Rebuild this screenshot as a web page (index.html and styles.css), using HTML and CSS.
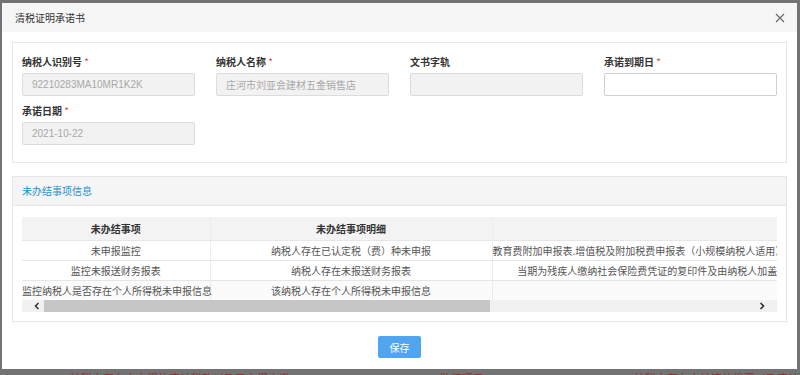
FILE: index.html
```html
<!DOCTYPE html>
<html lang="zh-CN">
<head>
<meta charset="UTF-8" />
<meta name="viewport" content="width=device-width, initial-scale=1" />
<title>清税证明承诺书</title>
<link rel="stylesheet" href="styles.css">
</head>
<body>

<div class="backdrop">
  <div class="modal">
    <div class="modal-head">
      <span class="modal-title">清税证明承诺书</span>
      <svg class="close-btn" width="10" height="10" viewBox="0 0 10 10">
        <path d="M1 1L9 9M9 1L1 9" stroke="#666" stroke-width="1.1" fill="none" />
      </svg>
    </div>

    <div class="modal-body">
      <div class="panel form-panel">
        <div class="form-grid">
          <div class="field">
            <label>纳税人识别号 <span class="req">*</span></label>
            <input class="ipt" type="text" value="92210283MA10MR1K2K" readonly />
          </div>
          <div class="field">
            <label>纳税人名称 <span class="req">*</span></label>
            <input class="ipt" type="text" value="庄河市刘亚会建材五金销售店" readonly />
          </div>
          <div class="field">
            <label>文书字轨</label>
            <input class="ipt" type="text" value="" readonly />
          </div>
          <div class="field">
            <label>承诺到期日 <span class="req">*</span></label>
            <input class="ipt ipt-edit" type="text" value="" />
          </div>
          <div class="field">
            <label>承诺日期 <span class="req">*</span></label>
            <input class="ipt" type="text" value="2021-10-22" readonly />
          </div>
        </div>
      </div>

      <div class="panel list-panel">
        <div class="panel-head">未办结事项信息</div>
        <div class="panel-inner">
          <div class="table-wrap">
            <table class="grid">
              <colgroup>
                <col class="c1" />
                <col class="c2" />
                <col class="c3" />
              </colgroup>
              <thead>
                <tr>
                  <th>未办结事项</th>
                  <th>未办结事项明细</th>
                  <th></th>
                </tr>
              </thead>
              <tbody>
                <tr>
                  <td>未申报监控</td>
                  <td>纳税人存在已认定税（费）种未申报</td>
                  <td>教育费附加申报表.增值税及附加税费申报表（小规模纳税人适用）附列资料（附加税费情况表）</td>
                </tr>
                <tr>
                  <td>监控未报送财务报表</td>
                  <td>纳税人存在未报送财务报表</td>
                  <td>当期为残疾人缴纳社会保险费凭证的复印件及由纳税人加盖公章的残疾职工名单</td>
                </tr>
                <tr>
                  <td>监控纳税人是否存在个人所得税未申报信息</td>
                  <td>该纳税人存在个人所得税未申报信息</td>
                  <td></td>
                </tr>
              </tbody>
            </table>
          </div>
          <div class="hscroll">
            <svg class="arrow" width="8" height="8" viewBox="0 0 8 8">
              <path d="M5.5 1L2.5 4L5.5 7" stroke="#333" stroke-width="1.6" fill="none" />
            </svg>
            <div class="track"><div class="thumb"></div></div>
            <svg class="arrow" width="8" height="8" viewBox="0 0 8 8">
              <path d="M2.5 1L5.5 4L2.5 7" stroke="#333" stroke-width="1.6" fill="none" />
            </svg>
          </div>
        </div>
      </div>
    </div>

    <div class="modal-foot">
      <button class="save-btn">保存</button>
    </div>
  </div>

  <div class="behind">
    <span class="w1">纳税人存在未申报的应纳税款以及已申报未缴</span>
    <span class="w2">监控项目</span>
    <span class="w3">纳税人存在未结清的发票以及应纳税款</span>
  </div>
</div>

</body>
</html>
```

FILE: styles.css
```css
html, body {
  margin: 0;
  height: 100%;
  overflow: hidden;
}
body {
  background: #737373;
  font-family: "Noto Sans CJK SC", "Liberation Sans", sans-serif;
  color: #333;
}
.backdrop {
  padding: 3px 3px 0 2px;
}
.modal {
  width: 795px;
  height: 366px;
  background: #fff;
  display: flex;
  flex-direction: column;
}
.modal-head {
  height: 29px;
  background: #f6f6f6;
  padding: 0 12px 0 13px;
  display: flex;
  align-items: center;
  justify-content: space-between;
  flex-shrink: 0;
}
.modal-title {
  font-size: 10px;
  color: #333;
}
.close-btn {
  margin-top: 1px;
}
.modal-body {
  padding: 10px 10px 0 10px;
}
.panel {
  border: 1px solid #e6e6e6;
}
.form-panel {
  padding: 12px 9px 17px 9px;
}
.form-grid {
  display: grid;
  grid-template-columns: repeat(4, 173px);
  column-gap: 21px;
  row-gap: 8px;
}
.field label {
  display: block;
  font-size: 10px;
  line-height: 14px;
  font-weight: bold;
  color: #333;
  margin-bottom: 4px;
}
.req {
  color: #e04848;
  font-weight: normal;
}
.ipt {
  box-sizing: border-box;
  width: 173px;
  height: 23px;
  border: 1px solid #dcdcdc;
  border-radius: 2px;
  background: #f2f2f2;
  padding: 0 9px;
  font-family: "Liberation Sans", "Noto Sans CJK SC", sans-serif;
  font-size: 10px;
  color: #a8a8a8;
  outline: none;
  display: block;
}
.ipt-edit {
  background: #fff;
  border-color: #d0d0d0;
}
.list-panel {
  margin-top: 13px;
}
.panel-head {
  height: 28px;
  line-height: 28px;
  background: #f5f5f5;
  border-bottom: 1px solid #e6e6e6;
  padding-left: 9px;
  font-size: 10px;
  color: #1e8fd0;
}
.panel-inner {
  padding: 11px 9px 9px 9px;
}
.table-wrap {
  width: 755px;
  overflow: hidden;
}
.grid {
  table-layout: fixed;
  width: 870px;
  border-collapse: collapse;
  font-size: 10px;
  color: #555;
}
.c1 { width: 188px; }
.c2 { width: 282px; }
.c3 { width: 400px; }
.grid th, .grid td {
  text-align: center;
  white-space: nowrap;
  padding: 0;
  border-left: 1px solid #ececec;
  border-bottom: 1px solid #e6e6e6;
}
.grid th:first-child, .grid td:first-child {
  border-left: none;
}
.grid th {
  height: 23px;
  background: #f3f3f3;
  font-weight: bold;
  color: #333;
}
.grid td {
  height: 19px;
  background: #fff;
}
.grid tbody tr:last-child td {
  border-bottom: none;
  background: #fbfbfb;
}
.hscroll {
  display: flex;
  align-items: center;
  height: 12px;
  background: #f1f1f1;
  width: 755px;
}
.arrow {
  flex-shrink: 0;
  margin: 0 3px 0 11px;
}
.arrow:last-child {
  margin: 0 11px 0 3px;
}
.track {
  flex: 1;
  height: 12px;
}
.thumb {
  width: 446px;
  height: 12px;
  background: #c6c6c6;
}
.modal-foot {
  flex: 1;
  display: flex;
  justify-content: center;
  align-items: flex-start;
  padding-top: 14px;
}
.save-btn {
  width: 43px;
  height: 22px;
  border: none;
  border-radius: 2px;
  background: #4fa6ee;
  color: #fff;
  font-family: "Noto Sans CJK SC", sans-serif;
  font-size: 10px;
  padding: 0;
}
.behind {
  height: 12px;
  margin-top: 3px;
  font-size: 11px;
  line-height: 12px;
  color: #9a2a2a;
  white-space: nowrap;
  display: flex;
}
.w1 { margin-left: 68px; }
.w2 { margin-left: 150px; }
.w3 { margin-left: 150px; }
```
